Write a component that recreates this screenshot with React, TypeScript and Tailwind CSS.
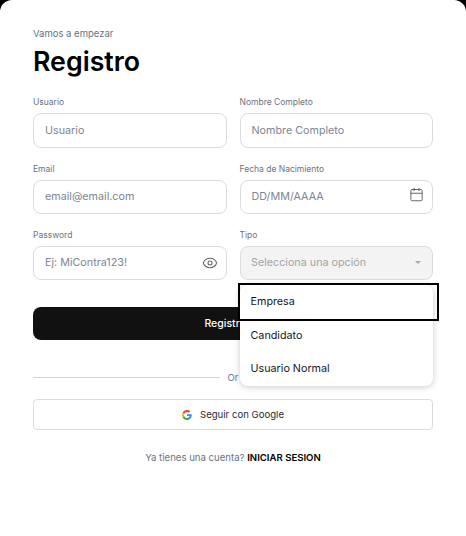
import React from "react";
import { Calendar, Eye } from "lucide-react";

const inputBox = "h-[34.3px] w-full rounded-lg border border-[#dcdcdc] bg-white px-[11px] flex items-center justify-between text-[10.75px] text-[#7c8594]";

const Field = ({ label, children }: { label: string; children: React.ReactNode }) => (
  <div className="flex flex-col gap-[5px]">
    <label className="text-[8.5px] leading-[12px] text-[#6b7280]">{label}</label>
    {children}
  </div>
);

const GoogleIcon = () => (
  <svg width="10" height="10" viewBox="0 0 48 48">
    <path fill="#EA4335" d="M24 9.5c3.5 0 6.700 1.200 9.200 3.600l6.900-6.900C35.900 2.400 30.500 0 24 0 14.600 0 6.500 5.400 2.600 13.200l8 6.200C12.500 13.600 17.800 9.500 24 9.500z" />
    <path fill="#4285F4" d="M46.900 24.500c0-1.600-.1-3.100-.4-4.500H24v9h12.900c-.6 3-2.200 5.500-4.700 7.200l7.700 6c4.500-4.200 7-10.300 7-17.700z" />
    <path fill="#FBBC05" d="M10.500 28.600c-.5-1.400-.8-3-.8-4.600s.3-3.200.8-4.600l-8-6.200C.9 16.500 0 20.100 0 24s.9 7.500 2.600 10.800l7.900-6.200z" />
    <path fill="#34A853" d="M24 48c6.500 0 11.900-2.100 15.900-5.800l-7.700-6c-2.200 1.400-4.900 2.300-8.200 2.300-6.200 0-11.500-4.200-13.400-9.800l-8 6.200C6.500 42.600 14.600 48 24 48z" />
  </svg>
);

export default function App() {
  return (
    <div className="h-[536px] w-[466px] bg-black overflow-hidden font-['Inter',sans-serif]">
      <div className="h-full rounded-t-xl bg-white px-[33px] pt-[27px]">
        <p className="text-[9.5px] leading-[13px] text-[#64748b]">Vamos a empezar</p>
        <h1 className="mt-[4px] text-[26.75px] leading-[34px] font-semibold text-black">Registro</h1>

        <div className="mt-[18.4px] grid grid-cols-2 gap-x-[13px] gap-y-[14.9px]">
          <Field label="Usuario">
            <div className={`${inputBox} pt-[1px]`}>Usuario</div>
          </Field>
          <Field label="Nombre Completo">
            <div className={`${inputBox} pt-[1px]`}>Nombre Completo</div>
          </Field>
          <Field label="Email">
            <div className={inputBox}>email@email.com</div>
          </Field>
          <Field label="Fecha de Nacimiento">
            <div className={`${inputBox} pr-[8px]`}>
              DD/MM/AAAA
              <Calendar size={15} strokeWidth={1.4} className="-mt-[4px] text-[#555]" />
            </div>
          </Field>
          <Field label="Password">
            <div className={`${inputBox} pr-[8px]`}>
              Ej: MiContra123!
              <Eye size={16} strokeWidth={1.6} className="text-[#666]" />
            </div>
          </Field>
          <Field label="Tipo">
            <div className="relative">
              <div className="h-[34.3px] w-full rounded-lg border border-[#dcdcdc] bg-[#f3f3f3] pl-[10.5px] pr-[11px] flex items-center justify-between text-[10.75px] text-[#a3a3a3]">
                Selecciona una opción
                <span className="h-0 w-0 border-x-[3.5px] border-t-[3.5px] border-x-transparent border-t-[#aaa]" />
              </div>
              <div className="absolute left-0 top-[39px] z-10 w-full rounded-lg bg-white shadow-[0_1px_6px_rgba(0,0,0,0.22)]">
                <div className="relative flex h-[34px] items-center px-[11px] text-[10.75px] text-[#111827]">
                  Empresa
                  <span className="absolute -left-[2px] -right-[6px] -top-[2px] -bottom-[2px] border-[2px] border-black" />
                </div>
                <div className="flex h-[34px] items-center px-[11px] text-[10.75px] text-[#111827]">Candidato</div>
                <div className="flex h-[33px] items-center px-[11px] text-[10.75px] text-[#111827]">Usuario Normal</div>
              </div>
            </div>
          </Field>
        </div>

        <button className="mt-[27px] flex h-[33px] w-full items-center justify-center rounded-lg bg-[#111111] text-[10.5px] font-medium text-white">
          Registrarse
        </button>

        <div className="mt-[30px] flex items-center gap-2">
          <div className="h-px flex-1 bg-[#d4d4d4]" />
          <span className="text-[9.5px] leading-[15px] text-[#6b7280]">Or</span>
          <div className="h-px flex-1 bg-[#d4d4d4]" />
        </div>

        <button className="mt-[14px] flex h-[31px] w-full items-center justify-center gap-[8px] rounded border border-[#dcdcdc] bg-white text-[9.6px] text-[#1f2937]">
          <GoogleIcon />
          <span className="pt-[1px]">Seguir con Google</span>
        </button>

        <p className="mt-[21px] text-center text-[9.6px] leading-[14px] text-[#6b7280]">
          Ya tienes una cuenta? <span className="font-semibold text-black">INICIAR SESION</span>
        </p>
      </div>
    </div>
  );
}
